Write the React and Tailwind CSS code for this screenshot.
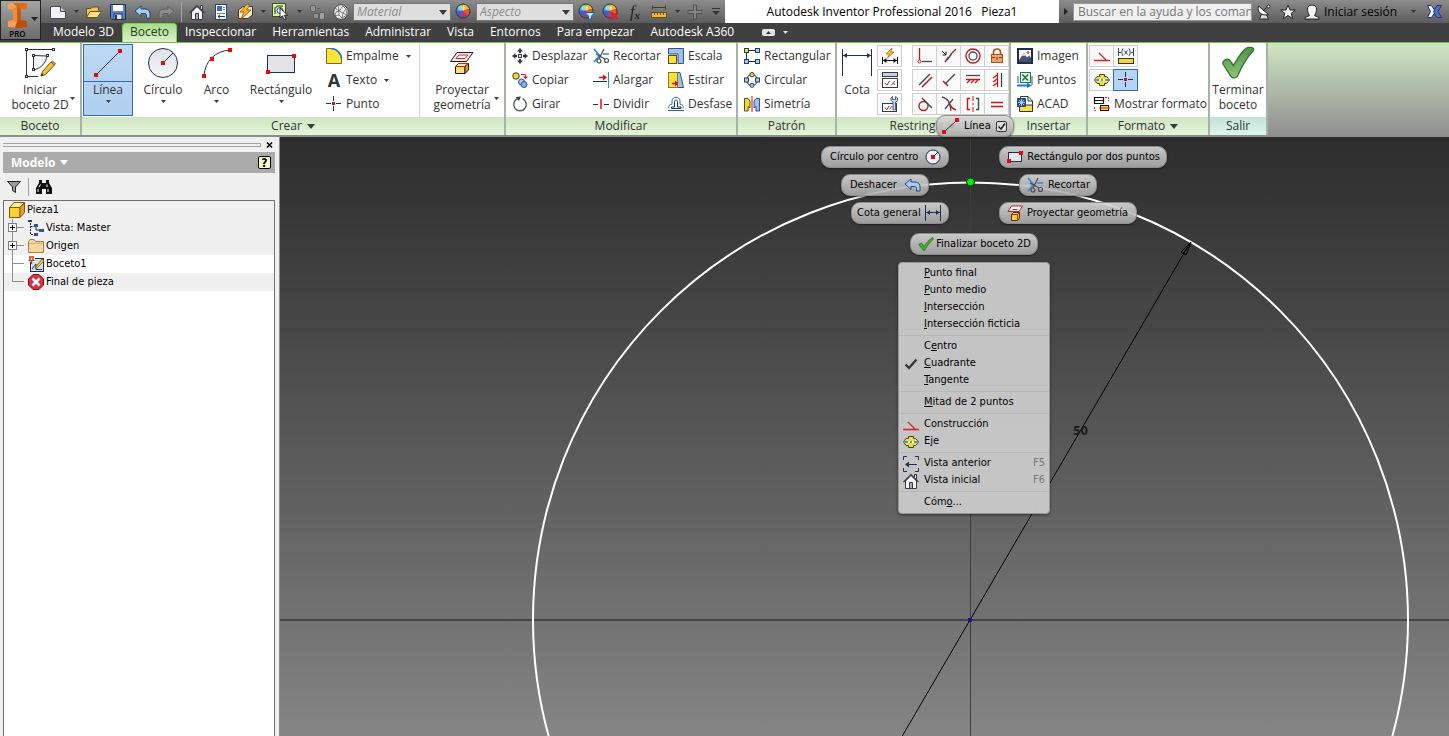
import React from "react";

/* ---------- icon helpers ---------- */

const Svg = ({ w = 16, h = 16, children }) => (
  <svg width={w} height={h} viewBox={`0 0 ${w} ${h}`} fill="none" className="shrink-0" aria-hidden="true">
    {children}
  </svg>
);

const Caret = ({ color = "#3a3a3a", w = 5, h = 3 }) => (
  <Svg w={w} h={h}>
    <path d={`M0 0H${w}L${w / 2} ${h}Z`} fill={color} />
  </Svg>
);

const navy = "#1f3052";
const red = "#e00c0c";

const Dot = ({ x, y, s = 4 }) => <rect x={x - s / 2} y={y - s / 2} width={s} height={s} fill={red} />;

/* ---------- quick access icons ---------- */

const NewIcon = () => (
  <Svg w={18} h={16}>
    <path d="M1.5 2.5H11.5L16.5 7.500V14.500H1.500Z" fill="#f4f4f8" stroke="#4a4a55" />
    <path d="M11.500 2.500V7.500H16.500" fill="#c5c9d6" stroke="#4a4a55" />
  </Svg>
);
const OpenIcon = () => (
  <Svg w={18} h={16}>
    <path d="M1.500 13V4.500H6L7.500 3H13.500V6" fill="#f0c95c" stroke="#6b4b12" />
    <path d="M1.500 13.500L5 7.500H16.500L12.500 13.500Z" fill="#ffe28b" stroke="#6b4b12" />
  </Svg>
);
const SaveIcon = () => (
  <Svg>
    <path d="M.5 .5H15.500V15.500H1.500L.5 14.500Z" fill="#5b82bd" stroke="#1c2f57" />
    <rect x="3" y="1" width="10" height="6" fill="#fff" />
    <rect x="4" y="10" width="8" height="5.500" fill="#dfe7f2" stroke="#1c2f57" />
    <rect x="5" y="11" width="2" height="4" fill="#1c2f57" />
  </Svg>
);
const UndoIcon = ({ fill = "#a9cdf0", stroke = "#22477a" }) => (
  <Svg w={17} h={14}>
    <path d="M1 6L7 1V4H11C14.500 4 16 6.500 16 9V13H12.500V10.500C12.500 9 12 8.500 10.500 8.500H7V11.500Z" fill={fill} stroke={stroke} strokeLinejoin="round" />
  </Svg>
);
const RedoIcon = () => (
  <Svg w={17} h={14}>
    <path d="M16 6L10 1V4H6C2.500 4 1 6.500 1 9V13H4.500V10.500C4.500 9 5 8.500 6.500 8.500H10V11.500Z" fill="#8b8b8b" stroke="#5d5d5d" strokeLinejoin="round" />
  </Svg>
);
const HomeIcon = () => (
  <Svg>
    <path d="M11.500 4V1.500H13.500V6" fill="#fff" stroke="#333" />
    <path d="M2.500 8V15.500H13.500V8L8 2.500Z" fill="#f7f7fa" stroke="#3b3b46" />
    <path d="M.5 9L8 1.500L15.500 9" stroke="#3b3b46" strokeWidth="1.200" />
    <path d="M6.500 15V9.500H9.500V15" fill="#a8acb8" stroke="#3b3b46" />
  </Svg>
);
const DocIcon = () => (
  <Svg w={12} h={16}>
    <rect x=".5" y=".5" width="11" height="15" fill="#fafcff" stroke="#33425f" />
    <rect x="2" y="2" width="5" height="5" fill="#3c6fb5" />
    <path d="M8 3.500H10M8 5.500H10M2 9.500H10" stroke="#7488a8" />
    <path d="M3 12.500H10M5 10.800L3 12.500L5 14.200" stroke="#173c7c" />
  </Svg>
);
const UpdateIcon = () => (
  <Svg w={17} h={16}>
    <path d="M1.500 6L6 2.500H15.500V11L11 14.500H1.500Z" fill="#f0ead8" stroke="#443515" />
    <path d="M10 0L3 8H7L4 15L14 6H9.500L13 1Z" fill="#ffb81f" stroke="#8f4d00" strokeWidth=".8" />
  </Svg>
);
const SelectIcon = () => (
  <Svg w={18} h={17}>
    <rect x=".5" y=".5" width="13" height="13" fill="#e9f0a8" stroke="#37541f" />
    <path d="M3 11V5L6 3H11" stroke="#3f7f54" strokeWidth="1.500" />
    <circle cx="8" cy="7.500" r="3" fill="#fff" stroke="#25509b" />
    <path d="M8 5V15L10.300 12.800L12.200 16.500L14 15.600L12.200 12.200H15.500Z" fill="#fff" stroke="#000" strokeWidth=".8" />
  </Svg>
);
const CubesIcon = () => (
  <Svg>
    <rect x="1.500" y="1.500" width="5" height="6" rx="1.500" fill="#959595" stroke="#5f5f5f" />
    <rect x="4.500" y="9.500" width="5" height="5" rx="1.500" fill="#959595" stroke="#5f5f5f" />
    <rect x="10.500" y="8.500" width="5" height="7" rx="1.500" fill="#a0a0a0" stroke="#5f5f5f" />
    <path d="M8 4.500H11" stroke="#5f5f5f" />
  </Svg>
);
const MeshBall = () => (
  <Svg>
    <circle cx="8" cy="8" r="7.300" fill="#ececec" stroke="#4b4b4b" />
    <path d="M2 4L6 7L10 2L13 5L10 9L14 11L9 14L6 11L2 12L3 8L6 7L6 11M10 9L6 7M10 9L9 14M6 7L5 2M13 5L14 11" stroke="#666" strokeWidth=".8" />
  </Svg>
);
const ColorBall = ({ badge }) => (
  <Svg w={18} h={17}>
    <path d="M8 8V1A7 7 0 0 1 14.500 5.500Z" fill="#f4b92e" />
    <path d="M8 8L14.500 5.500A7 7 0 0 1 13 13Z" fill="#e8562c" />
    <path d="M8 8L13 13A7 7 0 0 1 6 14.700Z" fill="#c5316d" />
    <path d="M8 8L6 14.700A7 7 0 0 1 1 8Z" fill="#5556c4" />
    <path d="M8 8L1 8A7 7 0 0 1 3.500 2.600Z" fill="#2f9be0" />
    <path d="M8 8L3.500 2.600A7 7 0 0 1 8 1Z" fill="#59bd4c" />
    <circle cx="8" cy="8" r="7" stroke="#35353f" />
    <ellipse cx="6.500" cy="5" rx="3.500" ry="2.500" fill="#fff" opacity=".5" />
    {badge === "filter" && <path d="M7 9.500H17L13.500 13V16H10.500V13Z" fill="#b8ecff" stroke="#0c6b99" />}
    {badge === "x" && <path d="M9.500 9.500L16 16M16 9.500L9.500 16" stroke="#d92020" strokeWidth="2.200" />}
  </Svg>
);
const RulerIcon = () => (
  <Svg>
    <path d="M1 3.500H15M1.500 1.500V5.500M14.500 1.500V5.500" stroke="#46391c" />
    <rect x=".5" y="8.500" width="15" height="5" fill="#f0b740" stroke="#694a0e" />
    <path d="M3.500 9V11M6.500 9V11M9.500 9V11M12.500 9V11" stroke="#694a0e" />
  </Svg>
);
const PlusIcon = () => (
  <Svg>
    <path d="M6.500 1H9.500V6.500H15V9.500H9.500V15H6.500V9.500H1V6.500H6.500Z" fill="#858585" stroke="#505050" />
  </Svg>
);
const MoreIcon = () => (
  <Svg w={8} h={7}>
    <path d="M0 .5H8" stroke="#333" />
    <path d="M0 3H8L4 7Z" fill="#333" />
  </Svg>
);
const DishIcon = () => (
  <Svg>
    <path d="M6 9L3.500 15H12.500L10 10" fill="#ddd" stroke="#222" />
    <path d="M2.500 2C.5 8 6 12.500 12.500 10.500Z" fill="#fff" stroke="#222" />
    <path d="M7.500 6.500L12 2.500" stroke="#222" />
    <circle cx="12.500" cy="2.500" r="1.500" fill="#fff" stroke="#222" />
  </Svg>
);
const StarIcon = () => (
  <Svg>
    <path d="M8 1L10 6H15.300L11.200 9.300L12.700 14.700L8 11.500L3.300 14.700L4.800 9.300L.7 6H6Z" fill="#f2f2f2" stroke="#222" />
  </Svg>
);
const PersonIcon = () => (
  <Svg>
    <path d="M1 15V13.500L5.500 11.500C4 9.500 3.500 7 3.500 5C3.500 2.500 5 1 8 1C11 1 12.500 2.500 12.500 5C12.500 7 12 9.500 10.500 11.500L15 13.500V15Z" fill="#f5f5f5" stroke="#222" />
  </Svg>
);
const ExchangeIcon = () => (
  <Svg w={15} h={13}>
    <path d="M.5 .5H4.500L8.500 6.500L4.500 12.500H.5L3.500 6.500Z" fill="#f3f6ff" stroke="#1d3279" />
    <path d="M14.500 .5H10L6.500 6.500L10 12.500H14.500L11 6.500Z" fill="#4d71cf" stroke="#1d3279" />
  </Svg>
);
const AppLogo = () => (
  <Svg w={19} h={26}>
    <path d="M0 1H19V8L13 7V18L19 19V25L10 26L0 25V19L5 18V8L0 7Z" fill="#dd7222" />
    <path d="M0 1H5L9 5L5 8L0 7Z" fill="#f0a05a" />
    <path d="M5 1H19L13 7L9 5Z" fill="#d96c1c" />
    <path d="M5 8L9 5L13 7V18L9 20L5 18Z" fill="#c75b12" />
    <path d="M5 8L9 5V20L5 18Z" fill="#ee8d3c" />
    <path d="M0 19L5 18L9 20L7 25.500L0 25Z" fill="#f0a05a" />
    <path d="M9 20L13 18L19 19V25L10 26L7 25.500Z" fill="#b9500d" />
  </Svg>
);

/* ---------- ribbon icons ---------- */

const StartSketch = () => (
  <Svg w={32} h={32}>
    <path d="M29 2.500H2.500V29.500H14" stroke="#2d3440" />
    <path d="M9.500 8.500V23L11 22.500C17 21 22 16 23 9L9.500 8.500Z" fill="#f6f7f9" stroke="#2d3440" />
    {[[2.500, 2.500], [29.500, 2.500], [2.500, 29.500], [9.500, 8.500], [23.500, 8.500], [9.500, 22.500]].map(([x, y]) => (
      <rect key={`${x}-${y}`} x={x - 1} y={y - 1} width="2" height="2" fill="#fff" stroke="#2d3440" />
    ))}
    <path d="M17 29L18.500 24.500L27 15L30.500 18L21.500 27.500Z" fill="#f2c230" stroke="#6b5217" />
    <path d="M27 15L28.500 14L31.500 16.500L30.500 18Z" fill="#e88e8e" stroke="#6b5217" strokeWidth=".7" />
    <path d="M17 29L18 26.500L19.500 27.900Z" fill="#222" />
  </Svg>
);
const LineIcon = () => (
  <Svg w={30} h={30}>
    <path d="M3 27L27 3" stroke={navy} />
    <Dot x={3} y={27} /><Dot x={27} y={3} />
  </Svg>
);
const gradId = "steel";
const CircleIcon = () => (
  <Svg w={32} h={32}>
    <defs>
      <linearGradient id={gradId} x1="0" y1="0" x2="0" y2="1">
        <stop offset="0" stopColor="#dde0e6" /><stop offset="1" stopColor="#f8f8fa" />
      </linearGradient>
    </defs>
    <circle cx="16" cy="16" r="14.500" fill={`url(#${gradId})`} stroke={navy} />
    <path d="M16 16L26 6" stroke={navy} />
    <Dot x={16} y={16} />
  </Svg>
);
const ArcIcon = () => (
  <Svg w={32} h={32}>
    <path d="M3 29C4 14 14 4 29 3" stroke={navy} />
    <Dot x={3} y={29} /><Dot x={11} y={12} /><Dot x={29} y={3} />
  </Svg>
);
const RectIcon = () => (
  <Svg w={32} h={32}>
    <rect x="2.500" y="8.500" width="27" height="17" fill="#e2e4e9" stroke={navy} />
    <Dot x={29} y={9} /><Dot x={3} y={25} />
  </Svg>
);
const Fillet = () => (
  <Svg><path d="M.5 15.500V.5H5C11 .5 15.500 6 15.500 11V15.500Z" fill="#fbe638" stroke="#7c6d14" /><path d="M5 .5C11 .5 15.500 6 15.500 11" stroke="#1d78c8" strokeWidth="1.500" /></Svg>
);
const TextIcon = () => (
  <span className="w-4 shrink-0 text-center text-[18px] leading-4 font-bold text-[#333]" aria-hidden="true">A</span>
);
const PointIcon = () => (
  <Svg><path d="M7.500 0V5M7.500 10V15M0 7.500H5M10 7.500H15" stroke={navy} /><rect x="6" y="6" width="3" height="3" fill={red} /></Svg>
);
const Project = () => (
  <Svg w={26} h={26}>
    <path d="M1.500 11.500L8 2.500H24L17.500 11.500Z" fill="#fbeeea" stroke="#2b1414" />
    <path d="M7 8.500L10 5H19L16 8.500Z" fill="#fff" stroke="#d8201c" />
    <path d="M6.500 16.500L9.500 13.500H19.500L16 16.500Z" fill="#fff3b0" stroke="#2b1414" />
    <path d="M6.500 16.500H16V23.500H6.500Z" fill="#fbdc7a" stroke="#2b1414" />
    <path d="M16 16.500L19.500 13.500V20L16 23.500Z" fill="#d89a28" stroke="#2b1414" />
    <path d="M6.500 16.500H16M6.500 16.500L9.500 13.500H19.500L16 16.500" stroke="#d8201c" />
  </Svg>
);
const MiniProject = () => (
  <Svg>
    <path d="M1 6.500L4.500 1H15.500L12 6.500Z" fill="#fff" stroke="#c8201c" />
    <path d="M5.500 4.500H10.500" stroke="#c8201c" />
    <path d="M4.500 9.500L6.500 7.500H12.500V13L10.500 15.500H4.500Z" fill="#fbd23a" stroke="#5a2a10" />
    <path d="M4.500 9.500H10.500V15.500M10.500 9.500L12.500 7.500" stroke="#c8201c" />
  </Svg>
);
const Move = () => (
  <Svg><path d="M8 0L11 3.500H9V5H7V3.500H5ZM8 16L11 12.500H9V11H7V12.500H5ZM0 8L3.500 5V7H5V9H3.500V11ZM16 8L12.500 5V7H11V9H12.500V11Z" fill="#333a45" /><rect x="6.500" y="6.500" width="3" height="3" fill="#fff" stroke="#333a45" /></Svg>
);
const Copy = () => (
  <Svg><circle cx="4" cy="4" r="3.200" fill="#f7db35" stroke="#3b3b1a" /><circle cx="9.500" cy="10" r="3" fill="#aecaf0" stroke="#28508c" /><circle cx="12" cy="12.500" r="3" fill="#86aee4" stroke="#28508c" /><path d="M9 2.500H13.500V6" stroke="#d22" /><path d="M11 4.500H16L13.500 7.500Z" fill="#d22" /></Svg>
);
const Rotate = () => (
  <Svg><path d="M6 2.500A6.300 6.300 0 1 0 10.500 2.700" stroke="#555b66" strokeWidth="1.400" /><path d="M3.500 1L9 .5L7 5Z" fill="#444" /></Svg>
);
const Trim = () => (
  <Svg><path d="M1 1L6.500 7.500L1 14M10 6H16" stroke="#2d8ed8" strokeWidth="1.700" /><path d="M3 6L12 11M11 1L6 11" stroke="#4a4d55" strokeWidth="1.300" /><circle cx="6" cy="13" r="2" stroke="#4a4d55" strokeWidth="1.200" /><circle cx="13.500" cy="12.500" r="2" stroke="#4a4d55" strokeWidth="1.200" /></Svg>
);
const Extend = () => (
  <Svg><path d="M15.500 0V16" stroke="#2d8ed8" /><path d="M0 9.500H14" stroke={navy} /><path d="M6 5.500H11" stroke={red} strokeWidth="1.500" /><path d="M10 2.500L14 5.500L10 8.500Z" fill={red} /></Svg>
);
const Split = () => (
  <Svg><path d="M0 8.500H5M11 8.500H16" stroke={navy} /><path d="M8 3V13" stroke={red} strokeWidth="1.500" /></Svg>
);
const Scale = () => (
  <Svg><path d="M.5 6V.5H15.500V15.500H10V6Z" fill="#9fc0ee" stroke="#2c548e" /><rect x=".5" y="7.500" width="8" height="8" fill="#fae03a" stroke="#5c5010" /></Svg>
);
const Stretch = () => (
  <Svg><path d="M9.500 .5H12L15.500 15.500H9.500Z" fill="#9fc0ee" stroke="#2c548e" /><rect x=".5" y=".5" width="9" height="15" fill="#fae03a" stroke="#8c7a18" /><path d="M4 11.500H8" stroke={red} strokeWidth="1.500" /><path d="M7 8.500L10.500 11.500L7 14.500Z" fill={red} /></Svg>
);
const Offset = () => (
  <Svg><path d="M0 14.500H16M1 12.500C0 10 2 8 4 8.500V5C4 0 12 0 12 5V8.500C14 8 16 10 15 12.500" stroke="#1e66b0" /><path d="M3.500 12.500V11H6.500V5.500C6.500 3.500 9.500 3.500 9.500 5.500V11H13V12.500Z" stroke={navy} /></Svg>
);
const Node = ({ x, y, c = "#a9ccf4" }) => <rect x={x} y={y} width="4" height="4" fill={c} stroke="#1f3e70" />;
const RectPattern = () => (
  <Svg><path d="M2.500 4V12M5 2.500H12M5 13.500H12" stroke={navy} /><Node x={.5} y={.5} c="#f7db35" /><Node x={11.500} y={.5} /><Node x={.5} y={11.500} /><Node x={11.500} y={11.500} /></Svg>
);
const CircPattern = () => (
  <Svg><circle cx="8" cy="8" r="5.500" stroke={navy} /><circle cx="8" cy="2.700" r="2.200" fill="#f7db35" stroke="#333" /><Node x={.5} y={6} /><Node x={11.500} y={6} /><circle cx="8" cy="13.300" r="2" fill="#a9ccf4" stroke="#1f3e70" /></Svg>
);
const Mirror = () => (
  <Svg><path d="M.5 15V2.500H4L6 5V12L4 10.500V15Z" fill="#f7db35" stroke="#5c5010" /><path d="M15.500 15V2.500H12L10 5V12L12 10.500V15Z" fill="#9fc0ee" stroke="#2c548e" /><path d="M8 0V16" stroke={red} /></Svg>
);
const Dimension = () => (
  <Svg w={32} h={28}>
    <path d="M1.500 0V27M30.500 0V27M2 6.500H30" stroke="#232f47" />
    <path d="M2 6.500l4 -2.500v5ZM30 6.500l-4 -2.500v5Z" fill="#232f47" />
  </Svg>
);
const MiniDim = () => (
  <Svg><path d="M.5 0V16M15.500 0V16M1 7.500H15" stroke={navy} /><path d="M1.500 7.500L5 5V10ZM14.500 7.500L11 5V10Z" fill={navy} /></Svg>
);
const AutoDim = () => (
  <Svg><path d="M10 0L4 6H7.500L5.500 10L12 4H9Z" fill="#ffb81f" stroke="#9c5600" strokeWidth=".6" /><path d="M.5 9V16M15.500 9V16M1 12.500H15" stroke="#111" /><path d="M1 12.500L4.500 10V15ZM15 12.500L11.500 10V15Z" fill="#111" /></Svg>
);
const ShowCons = () => (
  <Svg><rect x=".5" y=".5" width="15" height="4" fill="#c7d0de" stroke="#333a48" /><rect x=".5" y="6.500" width="15" height="9" fill="#fff" stroke="#333a48" /><path d="M3 11L5 13.500M9 13.500L13 9" stroke="#d22" /><path d="M5 13L7.500 9M11.500 11L13 13" stroke="#444" /></Svg>
);
const ConsSettings = () => (
  <Svg><rect x=".5" y="7.500" width="14" height="8" fill="#fff" stroke="#333a48" /><path d="M3 11.500L5 14M7.500 13.500L10 10" stroke="#d22" /><path d="M5 13.500L7 10" stroke="#444" /><path d="M10.500 .5V3.500H13.500V.5L15.500 2V5L13.500 6V14H11V6L9 4.500V2Z" fill="#c2d4ee" stroke="#2c4a7c" strokeWidth=".8" /></Svg>
);
const c1 = "#c8171c";
const c2 = "#444b57";
const constraintIcons = [
  ["Coincidente", <Svg><path d="M2.500 0V12" stroke={c1} strokeWidth="1.300" /><path d="M5 13.500H15" stroke={c2} strokeWidth="1.300" /><circle cx="2.500" cy="13.500" r="1.500" stroke={c1} /></Svg>],
  ["Colineal", <Svg><path d="M10 6L15 1M4 14L7.500 9" stroke={c1} strokeWidth="1.400" /><path d="M6 12L10.500 6" stroke={c2} strokeWidth="1.400" /><path d="M1 3L5 7M5 3.500V7H1.500" stroke="#111" /></Svg>],
  ["Concéntrica", <Svg><circle cx="8" cy="8" r="7" stroke={c1} strokeWidth="1.400" /><circle cx="8" cy="8" r="4" stroke={c2} strokeWidth="1.300" /></Svg>],
  ["Fijar", <Svg><path d="M4.500 7V4C4.500 0 11.500 0 11.500 4V7" stroke="#9c5526" strokeWidth="1.700" /><rect x="2.500" y="6.500" width="11" height="8" fill="#eda56c" stroke="#9c5526" /><path d="M8 9V12M3 9.500H6M10 9.500H13" stroke="#7a3b12" /></Svg>],
  ["Paralela", <Svg><path d="M2 13L13 2" stroke={c2} strokeWidth="1.400" /><path d="M5 15L15 5" stroke={c1} strokeWidth="1.600" /></Svg>],
  ["Perpendicular", <Svg><path d="M2 9L7 14" stroke={c1} strokeWidth="1.600" /><path d="M4.500 11.500L14 2" stroke={c2} strokeWidth="1.400" /></Svg>],
  ["Horizontal", <Svg><path d="M1 3.500H15" stroke={c2} strokeWidth="1.300" /><path d="M1 7.500H15M5 8L2 11M9 8L6 11M13 8L10 11" stroke={c1} strokeWidth="1.300" /></Svg>],
  ["Vertical", <Svg><path d="M12.500 1V15" stroke={c2} strokeWidth="1.300" /><path d="M8.500 1V15M8 3L4 6M8 7L4 10M8 11L4 14" stroke={c1} strokeWidth="1.300" /></Svg>],
  ["Tangente", <Svg><circle cx="6.500" cy="10" r="4.500" stroke={c1} strokeWidth="1.400" /><path d="M5 2L15 12" stroke={c2} strokeWidth="1.400" /></Svg>],
  ["Suavizar", <Svg><path d="M1 1C5 2 7 4 8.500 7M12 3L4 13" stroke={c2} strokeWidth="1.300" /><path d="M8 6C9 10 12 13 15 14" stroke={c1} strokeWidth="1.500" /><path d="M9 9L10 15" stroke={c2} strokeWidth="1.300" /></Svg>],
  ["Simétrica", <Svg><path d="M5 2.500H2.500V13.500H5" stroke={c1} strokeWidth="1.400" /><path d="M11 2.500H13.500V13.500H11" stroke={c2} strokeWidth="1.400" /><path d="M8 0V5M8 7V9M8 11V16" stroke={c1} /></Svg>],
  ["Igual", <Svg><path d="M2 6.500H14M2 10.500H14" stroke={c1} strokeWidth="1.300" /></Svg>],
];
const Picture = () => (
  <Svg><rect x="1" y="1" width="14" height="14" fill="#fff" stroke="#1f2c4a" strokeWidth="2" /><path d="M2 12L7 5L10 9.500L12 7.500L14 10V14H2Z" fill="#4a5068" /><path d="M7 5L9 8H5Z" fill="#c8d0e0" /><circle cx="11" cy="4.500" r="1.500" fill="#d8643c" /></Svg>
);
const Excel = () => (
  <Svg><path d="M1 11V4M15 13V4" stroke="#1f5b96" /><rect x="3.500" y=".5" width="10" height="10" fill="#e5f5e5" stroke="#1e7b3e" /><path d="M5.500 2.500L11 8.500M11 2.500L5.500 8.500" stroke="#1e7b3e" strokeWidth="1.600" /><path d="M0 13.500H12" stroke="#1d78d0" strokeWidth="2" /><path d="M10 10.500L15 13.500L10 16Z" fill="#1d78d0" /></Svg>
);
const Acad = () => (
  <Svg><path d="M3.500 8V.5H11L15.500 5V15.500H11Z" fill="#fff" stroke="#27364f" /><path d="M11 .5V5H15.500" stroke="#27364f" /><path d="M2.500 9V15.500H15.500V9Z" fill="#fae03a" stroke="#27364f" /><rect x="0" y="2" width="9" height="9" fill="#29507e" /><path d="M4.500 3V10M1 6.500H8M2 4L7 9M7 4L2 9" stroke="#bfe3ff" strokeWidth=".8" /></Svg>
);
const Construction = () => (
  <Svg><path d="M0 12.500H16M5 5L12 12" stroke="#d8251c" strokeWidth="1.300" /></Svg>
);
const DrivenDim = () => (
  <Svg><path d="M.5 0V8M15.500 0V8M1 4.500H3M13 4.500H15M5 .5C3.500 3 3.500 5.500 5 8M11 .5C12.500 3 12.500 5.500 11 8M6.500 2.500L9.500 6.500M9.500 2.500L6.500 6.500" stroke="#1c365f" strokeWidth=".9" /><rect x=".5" y="10.500" width="15" height="5" fill="#f6d53a" stroke="#3b3310" /></Svg>
);
const Axis = () => (
  <Svg><path d="M4.500 4.500H5.500V2.500H10.500V4.500H12.500L14.500 6.500V9.500L12.500 11.500H10.500V13.500H5.500V11.500H3L1.500 9.500V6.500L3 4.500Z" fill="#f9dd2c" stroke="#493f0c" /><path d="M1 8H15" stroke="#fff" strokeWidth="2" /><path d="M0 8H5M7 8H9M11 8H16" stroke="#1d78c8" strokeWidth="1.500" /></Svg>
);
const ShowFormat = () => (
  <Svg w={17} h={17}><path d="M1.500 1.500H10.500V7.500H1.500ZM1 4.500H11" stroke="#111" strokeWidth="1.200" /><rect x="7.500" y="9.500" width="8" height="5" fill="#f6d53a" stroke="#111" /><path d="M6 12H17" stroke="#d22" /><path d="M12 1.500H15.500V5M1.500 11V14.500H4" stroke="#d22" strokeDasharray="2 1" /></Svg>
);
const BigCheck = () => (
  <Svg w={34} h={34}>
    <defs>
      <linearGradient id="leaf" x1="0" y1="0" x2="0" y2="1"><stop offset="0" stopColor="#4f9448" /><stop offset="1" stopColor="#8cc474" /></linearGradient>
    </defs>
    <path d="M2 18C1 15 6 12 8.500 14L12.500 19.500C17 12 20 6 25 2.500C27 .5 34 1 32.500 4.500C26 11 21 20 16.500 30C14.500 33 11.500 32 10 30.500Z" fill="url(#leaf)" stroke="#35702f" strokeWidth="1.300" />
  </Svg>
);

/* ---------- tree and menu icons ---------- */

const Part = () => (
  <Svg><path d="M.5 5.500L5 .5H15.500L11 5.500Z" fill="#fff0a0" stroke="#8a5608" /><path d="M.5 5.500H11V15.500H.5Z" fill="#fbcf36" stroke="#8a5608" /><path d="M11 5.500L15.500 .5V10.500L11 15.500Z" fill="#e39f1e" stroke="#8a5608" /></Svg>
);
const ViewRep = () => (
  <Svg><path d="M2.500 3V14.500H6M2.500 6.500H6" stroke="#222" strokeDasharray="2 1" /><rect x="0" y="0" width="4" height="2" fill="#1d3f73" /><rect x="6" y="4" width="4" height="3" fill="#2b5797" /><path d="M8 7V10H11" stroke="#222" /><rect x="11" y="9" width="5" height="3" fill="#2b5797" /><rect x="6" y="13" width="4" height="3" fill="#2b5797" /></Svg>
);
const Folder = () => (
  <Svg><path d="M.5 3.500L2 1.500H6L7.500 3.500H15.500V14.500H.5Z" fill="#f6d5a0" stroke="#a87a3a" /><path d="M1 5.500H15" stroke="#dcb072" /></Svg>
);
const SketchNode = () => (
  <Svg><rect x="2.500" y="2.500" width="13" height="13" fill="#cfe0f2" stroke="#1d2f4d" /><path d="M4 13L8 8V13.500H14" stroke="#1d2f4d" /><path d="M7 12L14 3L16 5L9 12Z" fill="#f2c230" stroke="#6b5217" strokeWidth=".7" /><rect x="0" y="0" width="7" height="6" fill="#fff" /><path d="M1 1H6M2 1V4M5 1V4M.5 4.500H6.500M3.500 5V8" stroke="#c04010" strokeWidth="1.300" /></Svg>
);
const EndOfPart = () => (
  <Svg><path d="M5 .5H11L15.500 5V11L11 15.500H5L.5 11V5Z" fill="#d8303c" stroke="#7d0d14" /><path d="M4.500 4.500L11.500 11.500M11.500 4.500L4.500 11.500" stroke="#fff" strokeWidth="2.500" /></Svg>
);
const Funnel = () => (
  <Svg w={14} h={12}><path d="M.5 .5H13.500L8.500 6V11.500L5.500 9.500V6Z" fill="#999" stroke="#222" /></Svg>
);
const Binoculars = () => (
  <Svg w={16} h={14}><path d="M3 0H6V3H10V0H13V3L16 8V14H10V9H6V14H0V8L3 3Z" fill="#111" /><path d="M3 7L4.500 4.500M11 7V4.500M2 12V9M12 12V9" stroke="#fff" /></Svg>
);
const Tick = () => (
  <Svg><path d="M.7 8.500L3.500 7L6 10.500C8.500 6.500 11.500 3.500 14.500 1.500L15.500 3C11.500 6.500 9 10 6.500 14.500H5.500Z" fill="#3fae28" stroke="#24751a" strokeWidth=".8" /></Svg>
);
const DarkTick = () => (
  <Svg><path d="M2.500 8.500L6 12L13.500 3.500" stroke="#383838" strokeWidth="2.400" /></Svg>
);
const PrevView = () => (
  <Svg><path d="M.5 4V.5H4M12 .5H15.500V4M.5 12V15.500H4M12 15.500H15.500V12M3 8.500H14" stroke="#1d3358" /><path d="M2 8.500L6 5.500V11.500Z" fill="#1d3358" /></Svg>
);
const MiniLine = () => <Svg w={18} h={16}><path d="M2 14L15 2" stroke={navy} /><Dot x={2} y={14} s={4} /><Dot x={15} y={2} s={4} /></Svg>;
const MiniCircle = () => <Svg><circle cx="8" cy="8" r="7" fill="#f0f1f4" stroke={navy} /><path d="M8 8L13 3" stroke={navy} /><Dot x={8} y={8} s={4} /></Svg>;
const MiniRect = () => <Svg><rect x="1.500" y="3.500" width="13" height="9" fill="#e6e8ee" stroke={navy} /><Dot x={14} y={4} s={4} /><Dot x={2} y={12} s={4} /></Svg>;

/* ---------- title bar ---------- */

const Quick = ({ label, children }) => (
  <button type="button" aria-label={label} className="flex h-full w-6 shrink-0 items-center justify-center">{children}</button>
);
const QuickArrow = ({ label }) => (
  <button type="button" aria-label={label} className="flex h-full w-3 shrink-0 items-center justify-center"><Caret color="#333" /></button>
);
const Combo = ({ label }) => (
  <span className="relative mr-px shrink-0">
    <select aria-label={label} className="block h-[18px] w-[98px] appearance-none border border-[#777] bg-[#dedede] pl-[3px] text-[12px] leading-4 text-[#8b8b8b] italic">
      <option>{label}</option>
    </select>
    <span className="pointer-events-none absolute top-[7px] right-1"><Caret w={8} h={5} /></span>
  </span>
);

const TitleBar = () => (
  <div className="flex h-[23px] text-[12px]">
    <div className="flex items-center bg-linear-to-b from-[#8d8d8d] to-[#5c5c5c] pl-[5px]">
      <Quick label="Nuevo"><NewIcon /></Quick>
      <QuickArrow label="Opciones de nuevo" />
      <Quick label="Abrir"><OpenIcon /></Quick>
      <Quick label="Guardar"><SaveIcon /></Quick>
      <Quick label="Deshacer"><UndoIcon /></Quick>
      <Quick label="Rehacer"><RedoIcon /></Quick>
      <span className="mx-[3px] h-5 w-px bg-[#a5a5a5]" />
      <Quick label="Inicio"><HomeIcon /></Quick>
      <Quick label="Volver"><DocIcon /></Quick>
      <Quick label="Actualizar"><UpdateIcon /></Quick>
      <QuickArrow label="Opciones de actualizar" />
      <Quick label="Seleccionar"><SelectIcon /></Quick>
      <QuickArrow label="Opciones de selección" />
      <Quick label="Componentes"><CubesIcon /></Quick>
      <Quick label="Materiales"><MeshBall /></Quick>
      <Combo label="Material" />
      <Quick label="Aspectos"><ColorBall /></Quick>
      <Combo label="Aspecto" />
      <Quick label="Ajustar aspecto"><ColorBall badge="filter" /></Quick>
      <Quick label="Borrar aspecto"><ColorBall badge="x" /></Quick>
      <Quick label="Parámetros">
        <span className="font-['Liberation_Serif',serif] text-[16px] leading-4 text-[#222] italic">f<sub className="text-[11px] font-bold">x</sub></span>
      </Quick>
      <Quick label="Medir"><RulerIcon /></Quick>
      <QuickArrow label="Opciones de medida" />
      <Quick label="Añadir"><PlusIcon /></Quick>
      <button type="button" aria-label="Personalizar" className="flex h-full w-[18px] items-center justify-center"><MoreIcon /></button>
    </div>
    <h1 className="flex min-w-0 flex-1 items-center justify-center bg-white text-black whitespace-pre">
      Autodesk Inventor Professional 2016   Pieza1
    </h1>
    <div className="flex w-[390px] shrink-0 items-center bg-linear-to-b from-[#8d8d8d] to-[#5c5c5c]">
      <span className="flex w-[14px] justify-center"><Svg w={4} h={7}><path d="M0 0V7L4 3.500Z" fill="#222" /></Svg></span>
      <input aria-label="Buscar" placeholder="Buscar en la ayuda y los comandos" className="h-[18px] w-[179px] border border-[#999] bg-[#f0f0f0] pl-1 text-[12px] placeholder:text-[#777]" />
      <Quick label="Centro de comunicaciones"><DishIcon /></Quick>
      <Quick label="Favoritos"><StarIcon /></Quick>
      <button type="button" className="flex flex-1 items-center gap-1 pl-1 text-black">
        <PersonIcon />Iniciar sesión
      </button>
      <QuickArrow label="Opciones de sesión" />
      <span className="flex w-[30px] justify-center"><ExchangeIcon /></span>
    </div>
  </div>
);

const tabs = ["Modelo 3D", "Boceto", "Inspeccionar", "Herramientas", "Administrar", "Vista", "Entornos", "Para empezar", "Autodesk A360"];

const Header = () => (
  <header className="relative flex flex-col bg-[#404040] pl-[41px]">
    <button type="button" aria-label="Menú de la aplicación" className="absolute top-0 left-0 flex h-10 w-[41px] border border-[#222] bg-linear-to-b from-[#a5a5a5] to-[#6c6c6c]">
      <span className="flex w-[37px] flex-col items-center gap-px pt-px pr-1 text-[8px] leading-[10px] font-semibold text-black"><AppLogo />PRO</span>
      <span className="absolute top-4 right-[2px]"><Caret color="#222" w={7} h={4} /></span>
    </button>
    <TitleBar />
    <nav className="flex h-[19px] items-stretch pl-1 text-[12px] leading-[18px] text-white">
      {tabs.map((t) =>
        t === "Boceto" ? (
          <a key={t} href="#boceto" aria-current="page" className="rounded-t-sm border border-b-0 border-[#7bd04c] bg-linear-to-b from-[#a8dc8c] to-[#dcf2cd] px-[7px] leading-4 text-[#2a3a22]">{t}</a>
        ) : (
          <a key={t} href="#tab" className="px-2">{t}</a>
        )
      )}
      <button type="button" aria-label="Minimizar cinta" className="ml-5 flex items-center gap-2">
        <Svg w={13} h={7}><rect width="13" height="7" rx="2" fill="#e6e6e6" /><path d="M4 5H9L6.500 2Z" fill="#333" /></Svg>
        <Caret color="#e6e6e6" />
      </button>
    </nav>
  </header>
);

/* ---------- ribbon ---------- */

const Panel = ({ title, menu, width, children, exit }) => (
  <section className={`flex shrink-0 flex-col border-r-2 border-[#a9b3a5] ${width}`}>
    <div className="flex h-[74px] bg-white pt-px">{children}</div>
    <h2 className={`flex h-[18px] items-center justify-center gap-[5px] bg-linear-to-b ${exit ? "from-[#c2e2d8] to-[#dcf6ee]" : "from-[#cfe5c3] to-[#e4f6d9]"}`}>
      {title}
      {menu && <Caret w={8} h={5} />}
    </h2>
  </section>
);

const Big = ({ icon, label, width, active, arrow = true }) => (
  <button
    type="button"
    className={`flex h-[72px] shrink-0 flex-col items-center border ${width} ${active ? "border-[#2d6cb5] bg-linear-to-b from-[#bcd8f4] to-[#b0d0f0]" : "border-transparent"}`}
  >
    <span className={`flex h-[37px] w-full items-center justify-center border-b ${active ? "border-[#2d6cb5]" : "border-transparent"}`}>{icon}</span>
    <span className="leading-4">{label}</span>
    {arrow && <span className="mt-[2px]"><Caret /></span>}
  </button>
);

const TwoLine = ({ icon, a, b, width, arrow }) => (
  <button type="button" className={`relative flex h-[72px] shrink-0 flex-col items-center ${width}`}>
    <span className="flex h-[38px] items-center justify-center">{icon}</span>
    <span className="leading-[15px]">{a}<br />{b}</span>
    {arrow && <span className="absolute right-[5px] bottom-4"><Caret /></span>}
  </button>
);

const Row = ({ icon, label, arrow }) => (
  <button type="button" className="flex h-6 items-center gap-1 text-left whitespace-nowrap">
    {icon}{label}
    {arrow && <span className="ml-[3px]"><Caret /></span>}
  </button>
);

const Col = ({ width = "", items }) => (
  <div className={`flex shrink-0 flex-col ${width}`}>
    {items.map(([label, icon, arrow]) => <Row key={label} label={label} icon={icon} arrow={arrow} />)}
  </div>
);

const Cell = ({ label, children, active }) => (
  <button
    type="button"
    aria-label={label}
    className={`flex h-[22px] w-[25px] items-center justify-center border ${active ? "relative border-[#2d6cb5] bg-[#b5d3f2]" : "border-[#cfcfcf] bg-[#fafafa]"}`}
  >
    {children}
  </button>
);

const Ribbon = () => (
  <div className="flex border-t border-b-2 border-t-[#7ab648] border-b-[#8b8f89] bg-linear-to-b from-[#cfe6c3] to-[#909090] text-[12px] text-[#333]">
    <Panel title="Boceto" width="w-[82px]">
      <TwoLine icon={<StartSketch />} a="Iniciar" b="boceto 2D" width="w-full" arrow />
    </Panel>
    <Panel title="Crear" menu width="w-[424px]">
      <div className="flex pl-px">
        <Big icon={<LineIcon />} label="Línea" width="w-[50px]" active />
        <Big icon={<CircleIcon />} label="Círculo" width="w-[60px]" />
        <Big icon={<ArcIcon />} label="Arco" width="w-[47px]" />
        <Big icon={<RectIcon />} label="Rectángulo" width="w-[82px]" />
        <Col width="w-[98px] pl-1 border-r border-[#d2d2d2]" items={[["Empalme", <Fillet />, true], ["Texto", <TextIcon />, true], ["Punto", <PointIcon />]]} />
        <TwoLine icon={<Project />} a="Proyectar" b="geometría" width="w-[84px]" arrow />
      </div>
    </Panel>
    <Panel title="Modificar" width="w-[232px]">
      <div className="flex pl-[6px]">
        <Col width="w-[81px]" items={[["Desplazar", <Move />], ["Copiar", <Copy />], ["Girar", <Rotate />]]} />
        <Col width="w-[75px]" items={[["Recortar", <Trim />], ["Alargar", <Extend />], ["Dividir", <Split />]]} />
        <Col items={[["Escala", <Scale />], ["Estirar", <Stretch />], ["Desfase", <Offset />]]} />
      </div>
    </Panel>
    <Panel title="Patrón" width="w-[99px]">
      <div className="pl-[6px]">
        <Col items={[["Rectangular", <RectPattern />], ["Circular", <CircPattern />], ["Simetría", <Mirror />]]} />
      </div>
    </Panel>
    <Panel title="Restringir" menu width="w-[174px]">
      <Big icon={<Dimension />} label="Cota" width="w-10" arrow={false} />
      <div className="flex flex-col gap-[2px] pt-px">
        <Cell label="Acotación automática"><AutoDim /></Cell>
        <Cell label="Mostrar restricciones"><ShowCons /></Cell>
        <Cell label="Configuración de restricciones"><ConsSettings /></Cell>
      </div>
      <div className="ml-[10px] grid auto-rows-min grid-cols-[24px_24px_24px_24px] gap-y-[2px] pt-px">
        {constraintIcons.map(([label, icon]) => <Cell key={label} label={label}>{icon}</Cell>)}
      </div>
    </Panel>
    <Panel title="Insertar" width="w-[77px]">
      <div className="pl-[6px]">
        <Col items={[["Imagen", <Picture />], ["Puntos", <Excel />], ["ACAD", <Acad />]]} />
      </div>
    </Panel>
    <Panel title="Formato" menu width="w-[122px]">
      <div className="flex flex-col pl-px">
        <div className="grid grid-cols-[24px_24px] gap-y-[2px] pt-px pb-px">
          <Cell label="Construcción"><Construction /></Cell>
          <Cell label="Cota guiada"><DrivenDim /></Cell>
          <Cell label="Eje"><Axis /></Cell>
          <Cell label="Punto central" active><PointIcon /></Cell>
        </div>
        <div className="pl-1"><Row icon={<ShowFormat />} label="Mostrar formato" /></div>
      </div>
    </Panel>
    <Panel title="Salir" width="w-[58px]" exit>
      <TwoLine icon={<BigCheck />} a="Terminar" b="boceto" width="w-full" />
    </Panel>
  </div>
);

/* ---------- model browser ---------- */

const treeItems = [
  { label: "Vista: Master", icon: <ViewRep />, open: true },
  { label: "Origen", icon: <Folder />, open: true },
  { label: "Boceto1", icon: <SketchNode />, white: true },
  { label: "Final de pieza", icon: <EndOfPart />, last: true },
];

const Browser = () => (
  <aside className="flex w-[280px] shrink-0 flex-col border-r border-[#8a8a8a] bg-[#f0f0f0] pr-1 pl-[3px] font-['DejaVu_Sans_Condensed','Open_Sans',sans-serif] text-[11px] text-black">
    <div className="flex h-[15px] items-center gap-1 pr-px">
      <span className="h-1 flex-1 border-y border-r border-[#a2a2a2]" />
      <button type="button" aria-label="Cerrar panel" className="p-px"><Svg w={7} h={6}><path d="M1 .5L6 5.500M6 .5L1 5.500" stroke="#000" strokeWidth="1.500" /></Svg></button>
    </div>
    <div className="flex h-[21px] items-center justify-between bg-[#ababab] pr-1 pl-2">
      <button type="button" className="flex items-center gap-1 font-['Open_Sans',sans-serif] text-[12px] font-bold text-white">Modelo<Caret color="#fff" w={8} h={5} /></button>
      <button type="button" aria-label="Ayuda" className="flex h-[13px] w-[13px] items-center justify-center rounded-[2px] border border-black bg-[#ffffd0] text-[12px] leading-3 font-bold">?</button>
    </div>
    <div className="flex h-[27px] items-center pl-1">
      <button type="button" aria-label="Filtro"><Funnel /></button>
      <span className="mx-[7px] h-[18px] w-px bg-[#a0a0a0]" />
      <button type="button" aria-label="Buscar en el navegador"><Binoculars /></button>
    </div>
    <div className="flex-1 border border-b-0 border-[#707070] bg-white">
      <div className="flex h-[18px] items-center gap-[2px] bg-[#f0f0f0] pl-[5px]"><Part />Pieza1</div>
      <ul>
        {treeItems.map((n) => (
          <li key={n.label} className={`flex h-[18px] items-center ${n.white ? "bg-white" : "bg-[#f0f0f0]"}`}>
            <span className="flex w-6 shrink-0">
              <Svg w={24} h={18}>
                <path d={`M8.500 0V${n.last ? 9 : 18}M8.500 8.500H20`} stroke="#909090" />
                {n.open && <><rect x="4.500" y="4.500" width="8" height="8" fill="#fff" stroke="#808080" /><path d="M6 8.500H11M8.500 6V11" stroke="#000" /></>}
              </Svg>
            </span>
            <button type="button" className="flex items-center gap-[2px]">{n.icon}{n.label}</button>
          </li>
        ))}
      </ul>
    </div>
  </aside>
);

/* ---------- drawing canvas ---------- */

const pillBase = "absolute flex h-[22px] items-center rounded-[9px] border border-[#8c8c8c] bg-linear-to-b from-[#d9d9d9]/90 to-[#a9a9a9]/90 shadow-[0_1px_2px_rgba(0,0,0,0.5)] whitespace-nowrap";

const Pill = ({ place, icon, label, after }) => (
  <button type="button" className={`${pillBase} justify-between ${place}`}>
    {!after && icon}{label}{after && icon}
  </button>
);

const Underlined = ({ text, at }) => (
  <span>{text.slice(0, at)}<u>{text[at]}</u>{text.slice(at + 1)}</span>
);

const menuGroups = [
  [["Punto final", 0], ["Punto medio", 0], ["Intersección", 0], ["Intersección ficticia", 0]],
  [["Centro", 1], ["Cuadrante", 0, <DarkTick />], ["Tangente", 0]],
  [["Mitad de 2 puntos", 0]],
  [["Construcción", -1, <Construction />], ["Eje", -1, <Axis />]],
  [["Vista anterior", -1, <PrevView />, "F5"], ["Vista inicial", -1, <HomeIcon />, "F6"]],
  [["Cómo...", 3]],
];

const ContextMenu = () => (
  <div role="menu" className="absolute top-[125px] left-[618px] w-[152px] rounded-[4px] border border-[#999] bg-[#c8c8c8]/97 py-[2px] shadow-[0_1px_3px_rgba(0,0,0,0.5)]">
    {menuGroups.map((g, i) => (
      <div key={g[0][0]} className={i ? "mt-[2px] border-t border-[#b8b8b8] pt-[2px]" : ""}>
        {g.map(([label, at, icon, key]) => (
          <button key={label} type="button" role="menuitem" className="flex h-[17px] w-full items-center pr-1 pl-1 text-left">
            <span className="flex w-[21px] shrink-0 items-center">{icon}</span>
            <span className="flex-1">{at < 0 ? label : <Underlined text={label} at={at} />}</span>
            {key && <span className="text-[#777]">{key}</span>}
          </button>
        ))}
      </div>
    ))}
  </div>
);

const Canvas = () => (
  <main className="relative min-w-0 flex-1 bg-linear-to-b from-[#2d2d2d] to-[#858585] font-['DejaVu_Sans_Condensed','Open_Sans',sans-serif] text-[11px] text-black">
    <svg className="absolute inset-0 h-full w-full overflow-hidden" fill="none" role="img" aria-label="Boceto con un círculo de diámetro 50">
      <path d="M0 483H3000" stroke="#444" strokeWidth="2" />
      <path d="M690.500 0V2000" stroke="#3d3d3d" />
      <circle cx="690.500" cy="483" r="437.500" stroke="#fff" strokeWidth="2" />
      <path d="M910 106L554 716" stroke="#000" />
      <path d="M911 105L901 115L906 118ZM908 110L903 116" stroke="#000" />
      <text x="793" y="298" fontSize="12" fontWeight="600" fill="#1c1c1c">50</text>
      <circle cx="690.500" cy="45" r="4" fill="#00f000" stroke="#0a3a0a" />
      <rect x="688" y="481" width="4" height="4" fill="#2a107c" />
    </svg>

    <div className={`${pillBase} -top-[22px] left-[656px] z-10 w-[78px] justify-between pr-[6px] pl-[5px]`}>
      <button type="button" className="flex items-center gap-1"><MiniLine />Línea</button>
      <label className="relative flex" aria-label="Opciones de línea">
        <input type="checkbox" defaultChecked className="peer h-[11px] w-[11px] appearance-none rounded-[2px] border border-[#333] bg-[#ddd]" />
        <svg width="9" height="9" viewBox="0 0 9 9" fill="none" className="pointer-events-none absolute top-px left-px hidden peer-checked:block" aria-hidden="true"><path d="M1.500 4.500L4 7L8 1.500" stroke="#222" strokeWidth="1.500" /></svg>
      </label>
    </div>
    <Pill place="top-[9px] left-[541px] w-[128px] pl-2 pr-[7px]" icon={<MiniCircle />} label="Círculo por centro" after />
    <Pill place="top-[37px] left-[561px] w-[88px] pl-2 pr-[7px]" icon={<UndoIcon />} label="Deshacer" after />
    <Pill place="top-[65px] left-[571px] w-[98px] pl-[5px] pr-[7px]" icon={<MiniDim />} label="Cota general" after />
    <Pill place="top-[9px] left-[719px] w-[168px] pl-[7px] pr-[6px]" icon={<MiniRect />} label="Rectángulo por dos puntos" />
    <Pill place="top-[37px] left-[739px] w-[78px] pl-[7px] pr-[6px]" icon={<Trim />} label="Recortar" />
    <Pill place="top-[65px] left-[719px] w-[138px] pl-[7px] pr-2" icon={<MiniProject />} label="Proyectar geometría" />
    <Pill place="top-[96px] left-[630px] w-[128px] pl-[7px] pr-[6px]" icon={<Tick />} label="Finalizar boceto 2D" />
    <ContextMenu />
  </main>
);

export default function App() {
  return (
    <div className="flex min-h-screen flex-col overflow-x-hidden bg-[#f0f0f0] font-['Open_Sans','Noto_Sans',sans-serif]">
      <Header />
      <Ribbon />
      <div className="flex flex-1">
        <Browser />
        <Canvas />
      </div>
    </div>
  );
}
